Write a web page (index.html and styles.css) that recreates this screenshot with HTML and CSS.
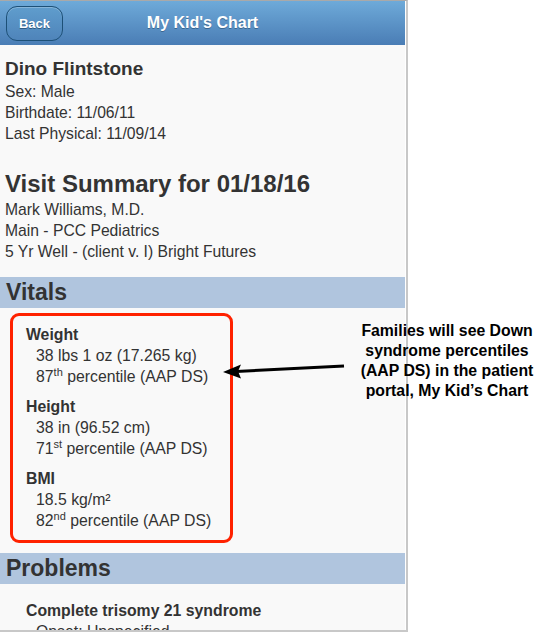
FILE: index.html
```html
<!DOCTYPE html>
<html lang="en">
<head>
    <meta charset="UTF-8">
    <meta name="viewport" content="width=device-width, initial-scale=1.0">
    <title>My Kid's Chart</title>
    <link rel="stylesheet" href="styles.css">
</head>
<body>

    <div class="stage">
        <div class="phone">
            <div class="screen">
                <div class="topbar">
                    <a class="back-btn" href="#">Back</a>
                    <h1>My Kid's Chart</h1>
                    <span></span>
                </div>

                <div class="patient">
                    <h2>Dino Flintstone</h2>
                    <p>Sex: Male</p>
                    <p>Birthdate: 11/06/11</p>
                    <p>Last Physical: 11/09/14</p>
                </div>

                <div class="visit">
                    <h2>Visit Summary for 01/18/16</h2>
                    <p>Mark Williams, M.D.</p>
                    <p>Main - PCC Pediatrics</p>
                    <p>5 Yr Well - (client v. I) Bright Futures</p>
                </div>

                <h3 class="section-bar">Vitals</h3>
                <div class="vitals-box">
                    <div class="vital">
                        <div class="vital-name">Weight</div>
                        <div class="vital-val">38 lbs 1 oz (17.265 kg)</div>
                        <div class="vital-val">87<sup>th</sup> percentile (AAP DS)</div>
                    </div>
                    <div class="vital">
                        <div class="vital-name">Height</div>
                        <div class="vital-val">38 in (96.52 cm)</div>
                        <div class="vital-val">71<sup>st</sup> percentile (AAP DS)</div>
                    </div>
                    <div class="vital">
                        <div class="vital-name">BMI</div>
                        <div class="vital-val">18.5 kg/m²</div>
                        <div class="vital-val">82<sup>nd</sup> percentile (AAP DS)</div>
                    </div>
                </div>

                <h3 class="section-bar problems-bar">Problems</h3>
                <div class="problem">
                    <div class="vital-name">Complete trisomy 21 syndrome</div>
                    <div class="vital-val">Onset: Unspecified</div>
                </div>
            </div>
        </div>

        <p class="callout">Families will see Down<br>syndrome percentiles<br>(AAP DS) in the patient<br>portal, My Kid’s Chart</p>
        <svg class="callout-arrow" width="130" height="30" viewBox="220 358 130 30">
            <line x1="344" y1="366" x2="236" y2="371.4" stroke="#000" stroke-width="3"/>
            <polygon points="223,372 241,364.5 238,371.3 241,378.5" fill="#000"/>
        </svg>
    </div>

</body>
</html>
```

FILE: styles.css
```css
body {
    font-family: "Liberation Sans", Arial, sans-serif;
    background-color: #fff;
    margin: 0;
    padding: 0;
}
.stage {
    position: relative;
    width: 552px;
    height: 632px;
    overflow: hidden;
}
.phone {
    width: 406px;
    height: 629px;
    border-top: 1px solid #a9a9a9;
    border-right: 2px solid #c8c8c8;
    border-bottom: 2px solid #c8c8c8;
    background-color: #fff;
    overflow: hidden;
}
.screen {
    width: 405px;
    height: 100%;
    background-color: #f9f9f9;
    color: #333;
    overflow: hidden;
}
.topbar {
    display: grid;
    grid-template-columns: 1fr auto 1fr;
    align-items: center;
    height: 44px;
    background: linear-gradient(#6eaad9, #4a7db5);
}
.topbar h1 {
    margin: 0;
    font-size: 16px;
    font-weight: bold;
    color: #fff;
    text-shadow: 0 1px 0 #3a6690;
}
.back-btn {
    justify-self: start;
    margin-left: 6px;
    width: 55px;
    height: 33px;
    line-height: 33px;
    text-align: center;
    border: 1px solid #1d5077;
    border-radius: 11px;
    background: linear-gradient(#5f9dcd, #4f84ba);
    box-shadow: inset 0 1px 0 rgba(255, 255, 255, 0.25);
    color: #fff;
    font-size: 13px;
    font-weight: bold;
    text-decoration: none;
    text-shadow: 0 1px 0 #2e5a82;
}
.patient, .visit {
    padding-left: 5px;
}
.patient {
    padding-top: 11px;
}
.patient h2 {
    margin: 0;
    font-size: 19px;
    line-height: 25px;
}
.patient p, .visit p {
    margin: 0;
    font-size: 15.7px;
    line-height: 21px;
}
.visit {
    margin-top: 26px;
}
.visit h2 {
    margin: 0 0 1px;
    font-size: 24px;
    line-height: 28px;
}
.section-bar {
    margin: 15px 0 0;
    padding-left: 6px;
    height: 31px;
    line-height: 31px;
    background-color: #b0c5de;
    font-size: 23px;
    font-weight: bold;
}
.vitals-box {
    width: 194px;
    margin: 5px 0 0 10px;
    padding: 8px 10px 9px 13px;
    border: 3px solid #ff2200;
    border-radius: 9px;
}
.vital + .vital {
    margin-top: 9px;
}
.vital-name {
    font-size: 15.8px;
    font-weight: bold;
    line-height: 21px;
}
.vital-val {
    padding-left: 10px;
    font-size: 15.8px;
    line-height: 21px;
}
.vital-val sup {
    font-size: 11px;
    line-height: 0;
    vertical-align: 6px;
}
.problems-bar {
    margin-top: 10px;
}
.problem {
    padding: 16px 0 0 26px;
}
.callout {
    position: absolute;
    left: 347px;
    top: 321px;
    width: 200px;
    margin: 0;
    text-align: center;
    font-size: 15.8px;
    font-weight: bold;
    line-height: 20px;
    color: #000;
}
.callout-arrow {
    position: absolute;
    left: 220px;
    top: 358px;
}
```
